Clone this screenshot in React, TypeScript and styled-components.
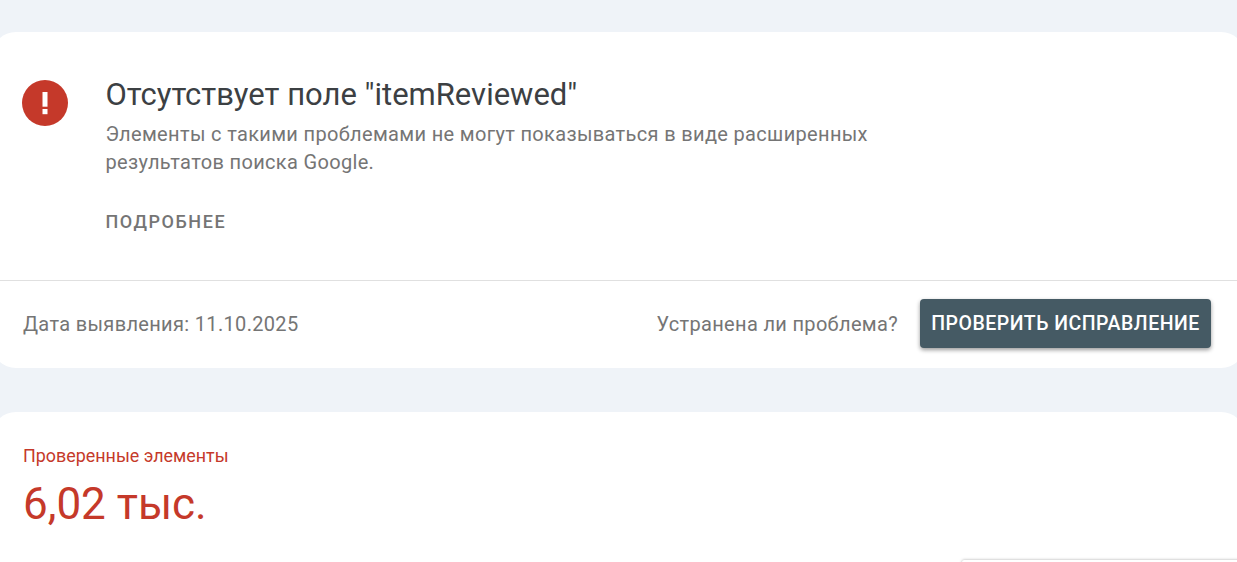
import styled, { createGlobalStyle } from 'styled-components'

const GlobalStyle = createGlobalStyle`
    html, body {
        margin: 0;
        height: 100%;
        overflow: hidden;
        background: #eff3f8;
        font-family: Roboto, "Liberation Sans", sans-serif;
    }
`

const Page = styled.div`
    height: 562px;
    overflow: hidden;
    padding-top: 32px;
    box-sizing: border-box;
    display: flex;
    flex-direction: column;
    gap: 44px;
`

const Card = styled.section`
    margin: 0 -8px;
    background: #fff;
    border-radius: 24px;
`

const IssueBody = styled.div`
    display: flex;
    height: 248px;
    box-sizing: border-box;
    padding: 47px 30px 0;
`

const IssueIcon = styled.svg`
    width: 46px;
    height: 46px;
    flex: none;
    margin: 1px 37.5px 0 0;
`

const IssueText = styled.div`
    width: 780px;
`

const Title = styled.h1`
    margin: 0;
    font-size: 31px;
    line-height: 32px;
    font-weight: 400;
    color: #3c4043;
`

const Description = styled.p`
    margin: 9px 0 0;
    font-size: 20px;
    line-height: 28px;
    letter-spacing: 0.335px;
    color: #757575;
`

const MoreLink = styled.a`
    display: block;
    margin-top: 36px;
    font-size: 18px;
    line-height: 20px;
    font-weight: 500;
    letter-spacing: 1.55px;
    text-transform: uppercase;
    color: #757575;
`

const Footer = styled.div`
    display: flex;
    align-items: center;
    justify-content: space-between;
    height: 88px;
    box-sizing: border-box;
    padding: 0 34px 2px 31px;
    border-top: 1px solid #e0e0e0;
`

const Muted = styled.span`
    font-size: 20px;
    letter-spacing: 0.33px;
    color: #757575;
`

const FixActions = styled.div`
    display: flex;
    align-items: center;
    gap: 22px;
`

const ValidateButton = styled.button`
    height: 49px;
    width: 291px;
    padding: 0;
    border: none;
    border-radius: 4px;
    background: #455a64;
    color: #fff;
    font-family: inherit;
    font-size: 19.5px;
    font-weight: 500;
    letter-spacing: 0.5px;
    white-space: nowrap;
    text-transform: uppercase;
    box-shadow: 0 2px 4px rgba(0, 0, 0, 0.4);
`

const StatsCard = styled(Card)`
    flex: 1;
    padding: 32px 31px 0;
    display: flex;
    flex-direction: column;
`

const StatLabel = styled.div`
    font-size: 17.9px;
    line-height: 24px;
    color: #c5392a;
`

const StatValue = styled.div`
    margin-top: 10px;
    font-size: 44px;
    line-height: 52px;
    color: #c5392a;
`

const ChartPanel = styled.div`
    align-self: flex-end;
    width: 285px;
    height: 40px;
    margin: 30px -33px 0 0;
    border-radius: 2px;
    background: #fff;
    box-shadow: 0 0 3px rgba(0, 0, 0, 0.35);
`

export default function App() {
    return (
        <>
            <GlobalStyle />
            <Page>
                <Card>
                    <IssueBody>
                        <IssueIcon viewBox="0 0 46 46">
                            <circle cx="23" cy="23" r="23" fill="#c5392a" />
                            <rect x="20.5" y="12" width="5" height="14.7" fill="#fff" />
                            <rect x="20.5" y="29" width="5" height="5.2" fill="#fff" />
                        </IssueIcon>
                        <IssueText>
                            <Title>Отсутствует поле "itemReviewed"</Title>
                            <Description>
                                Элементы с такими проблемами не могут показываться в виде расширенных
                                результатов поиска Google.
                            </Description>
                            <MoreLink>Подробнее</MoreLink>
                        </IssueText>
                    </IssueBody>
                    <Footer>
                        <Muted>Дата выявления: 11.10.2025</Muted>
                        <FixActions>
                            <Muted>Устранена ли проблема?</Muted>
                            <ValidateButton>Проверить исправление</ValidateButton>
                        </FixActions>
                    </Footer>
                </Card>
                <StatsCard>
                    <StatLabel>Проверенные элементы</StatLabel>
                    <StatValue>6,02 тыс.</StatValue>
                    <ChartPanel />
                </StatsCard>
            </Page>
        </>
    )
}
